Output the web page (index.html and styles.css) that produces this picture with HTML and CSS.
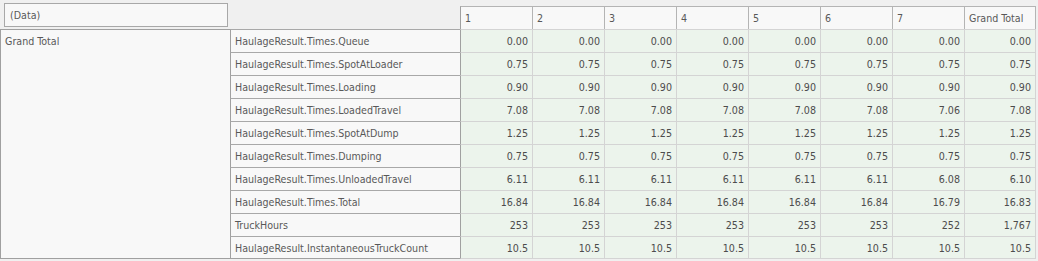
FILE: index.html
```html
<!DOCTYPE html>
<html>
<head>
<meta charset="utf-8">
<link rel="stylesheet" href="styles.css">
</head>
<body>
<div class="pivot">
  <div class="corner"><div class="databox">(Data)</div></div>
  <div class="hcell first">1</div>
  <div class="hcell">2</div>
  <div class="hcell">3</div>
  <div class="hcell">4</div>
  <div class="hcell">5</div>
  <div class="hcell">6</div>
  <div class="hcell">7</div>
  <div class="hcell lastcol">Grand Total</div>

  <div class="gt">Grand Total</div>

  <div class="field">HaulageResult.Times.Queue</div>
  <div class="num first">0.00</div><div class="num">0.00</div><div class="num">0.00</div><div class="num">0.00</div><div class="num">0.00</div><div class="num">0.00</div><div class="num">0.00</div><div class="num lastcol">0.00</div>

  <div class="field">HaulageResult.Times.SpotAtLoader</div>
  <div class="num first">0.75</div><div class="num">0.75</div><div class="num">0.75</div><div class="num">0.75</div><div class="num">0.75</div><div class="num">0.75</div><div class="num">0.75</div><div class="num lastcol">0.75</div>

  <div class="field">HaulageResult.Times.Loading</div>
  <div class="num first">0.90</div><div class="num">0.90</div><div class="num">0.90</div><div class="num">0.90</div><div class="num">0.90</div><div class="num">0.90</div><div class="num">0.90</div><div class="num lastcol">0.90</div>

  <div class="field">HaulageResult.Times.LoadedTravel</div>
  <div class="num first">7.08</div><div class="num">7.08</div><div class="num">7.08</div><div class="num">7.08</div><div class="num">7.08</div><div class="num">7.08</div><div class="num">7.06</div><div class="num lastcol">7.08</div>

  <div class="field">HaulageResult.Times.SpotAtDump</div>
  <div class="num first">1.25</div><div class="num">1.25</div><div class="num">1.25</div><div class="num">1.25</div><div class="num">1.25</div><div class="num">1.25</div><div class="num">1.25</div><div class="num lastcol">1.25</div>

  <div class="field">HaulageResult.Times.Dumping</div>
  <div class="num first">0.75</div><div class="num">0.75</div><div class="num">0.75</div><div class="num">0.75</div><div class="num">0.75</div><div class="num">0.75</div><div class="num">0.75</div><div class="num lastcol">0.75</div>

  <div class="field">HaulageResult.Times.UnloadedTravel</div>
  <div class="num first">6.11</div><div class="num">6.11</div><div class="num">6.11</div><div class="num">6.11</div><div class="num">6.11</div><div class="num">6.11</div><div class="num">6.08</div><div class="num lastcol">6.10</div>

  <div class="field">HaulageResult.Times.Total</div>
  <div class="num first">16.84</div><div class="num">16.84</div><div class="num">16.84</div><div class="num">16.84</div><div class="num">16.84</div><div class="num">16.84</div><div class="num">16.79</div><div class="num lastcol">16.83</div>

  <div class="field">TruckHours</div>
  <div class="num first">253</div><div class="num">253</div><div class="num">253</div><div class="num">253</div><div class="num">253</div><div class="num">253</div><div class="num">252</div><div class="num lastcol">1,767</div>

  <div class="field lastrow">HaulageResult.InstantaneousTruckCount</div>
  <div class="num first lastrow">10.5</div><div class="num lastrow">10.5</div><div class="num lastrow">10.5</div><div class="num lastrow">10.5</div><div class="num lastrow">10.5</div><div class="num lastrow">10.5</div><div class="num lastrow">10.5</div><div class="num lastcol lastrow">10.5</div>
</div>
</body>
</html>
```

FILE: styles.css
```css
html, body {
  margin: 0;
  padding: 0;
  background: #f0f0f0;
}
body {
  font-family: "DejaVu Sans Condensed", "DejaVu Sans", sans-serif;
  font-stretch: condensed;
  font-size: 10.6px;
  color: #585858;
}
.pivot {
  display: grid;
  grid-template-columns: 230px 230px repeat(8, 72px);
  grid-template-rows: 29px repeat(10, 23px);
  width: 1037px;
}
.pivot > div {
  box-sizing: border-box;
  white-space: nowrap;
  overflow: hidden;
}
.corner {
  grid-column: 1 / 3;
  padding: 3px 0 0 4px;
}
.databox {
  box-sizing: border-box;
  width: 224px;
  height: 24px;
  border: 1px solid #a8a8a8;
  background: #f8f8f8;
  padding-left: 5px;
  line-height: 22px;
}
.hcell {
  margin-top: 6px;
  border-top: 1px solid #b4b4b4;
  border-left: 1px solid #b4b4b4;
  background: #f8f8f8;
  padding-left: 4px;
  line-height: 22px;
}
.hcell.first {
  border-left-color: #a0a0a0;
}
.hcell.lastcol {
  border-right: 1px solid #b4b4b4;
}
.gt {
  grid-column: 1;
  grid-row: 2 / span 10;
  border-left: 1px solid #a0a0a0;
  border-top: 1px solid #a0a0a0;
  border-bottom: 1px solid #a0a0a0;
  background: #f8f8f8;
  padding-left: 4px;
  line-height: 22px;
}
.field {
  grid-column: 2;
  border-left: 1px solid #a0a0a0;
  border-top: 1px solid #a8a8a8;
  background: #f8f8f8;
  padding-left: 4px;
  line-height: 22px;
}
.num {
  border-left: 1px solid #d4d4d4;
  border-top: 1px solid #d4d4d4;
  background: #ecf4ec;
  text-align: right;
  padding-right: 4px;
  line-height: 22px;
  color: #4c4c4c;
}
.num.first {
  border-left-color: #a0a0a0;
}
.num.lastcol {
  border-right: 1px solid #d4d4d4;
}
.lastrow {
  border-bottom: 1px solid #d4d4d4;
}
.field.lastrow {
  border-bottom-color: #a0a0a0;
}
```
